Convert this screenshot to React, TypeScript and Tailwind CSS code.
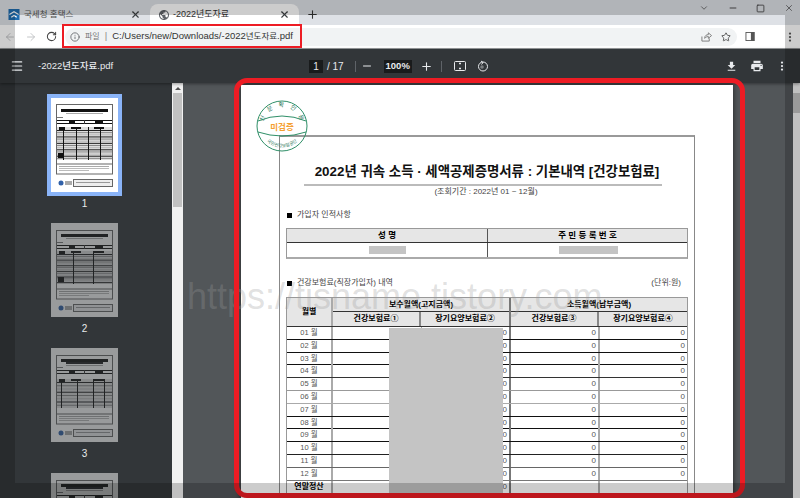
import { ArrowLeft, ArrowRight, Info, Menu, Minus, MoreVertical, Plus, RotateCw, Star, X, ChevronDown, Square } from 'lucide-react';

const KR = "font-['Liberation_Sans','Noto_Sans_CJK_KR',sans-serif]";

// row line colours go black / grey because the capture was downscaled
const months = [
  { label: '01 월', line: 'border-[#111]' },
  { label: '02 월', line: 'border-[#111]' },
  { label: '03 월', line: 'border-[#111]' },
  { label: '04 월', line: 'border-[#333]' },
  { label: '05 월', line: 'border-[#999]' },
  { label: '06 월', line: 'border-[#aaa]' },
  { label: '07 월', line: 'border-[#111]' },
  { label: '08 월', line: 'border-[#111]' },
  { label: '09 월', line: 'border-[#111]' },
  { label: '10 월', line: 'border-[#222]' },
  { label: '11 월', line: 'border-[#666]' },
  { label: '12 월', line: 'border-[#777]' },
];

const Thumb = ({ kind }: { kind: 1 | 2 | 3 }) => {
  const rows = kind === 1 ? 14 : kind === 2 ? 16 : 8;
  const cols = kind === 1 ? [12, 25, 37, 49] : kind === 2 ? [22, 42] : [10, 26, 42, 53];
  const top = kind === 3 ? 31 : kind === 2 ? 28 : 29;
  const h = kind === 3 ? 29 : 33;
  return (
    <svg viewBox="0 0 67 94" className="w-[67px] h-[94px] block bg-white">
      <rect x="5.5" y={kind === 1 ? 6.5 : 7.5} width="56" height="63" fill="none" stroke="#666" />
      <rect x="10" y="11" width="47" height="3" fill="#111" />
      {kind === 3 && <rect x="15" y="14" width="37" height="2" fill="#222" />}
      <rect x="15" y={kind === 3 ? 17 : 15} width="37" height="1" fill="#aaa" />
      <rect x="6" y="19" width="6" height="1" fill="#777" />
      <rect x="6" y="22" width="55" height="1" fill="#111" />
      <rect x="6" y="25" width="55" height="1" fill="#111" />
      <rect x="18" y="22" width="6" height="3" fill="#111" />
      <rect x="44" y="22" width="8" height="3" fill="#111" />
      <rect x="33" y="22" width="1" height="4" fill="#333" />
      <rect x="6" y={top} width="55" height={h} fill="#ddd" />
      {Array.from({ length: rows }).map((_, i) => (
        <rect key={i} x="6" y={top + 3 + (i * (h - 3)) / rows} width="55" height="1" fill={i % 3 === 0 ? '#222' : i % 3 === 1 ? '#888' : '#bbb'} />
      ))}
      {cols.map(x => (
        <rect key={x} x={x} y={top} width="1" height={h} fill="#111" />
      ))}
      <rect x="8" y={top} width="6" height="3" fill="#111" />
      <rect x="20" y={top} width="10" height="2" fill="#111" />
      <rect x="43" y={top} width="10" height="2" fill="#111" />
      {kind !== 3 && <rect x="7" y={top + h - 7} width="6" height="5" fill="#111" />}
      <rect x="5.5" y="66" width="56" height="10" fill="#fff" stroke="#666" />
      <rect x="8" y="68" width="50" height="1" fill="#aaa" />
      <rect x="8" y="70" width="50" height="1" fill="#bbb" />
      <rect x="8" y="72" width="30" height="1" fill="#bbb" />
      <circle cx="10" cy="85" r="2.5" fill="#3060a8" />
      <rect x="14" y="83" width="7" height="4" fill="#aaa" />
      <rect x="22.5" y="81.5" width="39" height="7" fill="#eee" stroke="#666" />
      <rect x="25" y="84" width="34" height="1" fill="#999" />
    </svg>
  );
};

const Stamp = () => (
  <svg viewBox="0 0 52 52" className="absolute left-[15px] top-[15px] w-[52px] h-[52px]">
    <defs>
      <path id="stampTop" d="M7 26a19 19 0 0 1 38 0" />
      <path id="stampBottom" d="M4.5 30a22 22 0 0 0 43 0" />
    </defs>
    <circle cx="26" cy="26" r="25" fill="none" stroke="#2f8f68" strokeWidth="1" />
    <path d="M2 21Q26 11 50 21M2 32Q26 40 50 32" fill="none" stroke="#2f8f68" />
    <text fontSize="6" fill="#2f7a5c" fontFamily="Noto Sans CJK KR" letterSpacing="5.5">
      <textPath href="#stampTop" startOffset="4">신분확인용</textPath>
    </text>
    <text fontSize="4.5" fill="#2f7a5c" fontFamily="Noto Sans CJK KR" textAnchor="middle">
      <textPath href="#stampBottom" startOffset="50%">국민건강보험공단</textPath>
    </text>
    <text x="26" y="29.5" textAnchor="middle" fontSize="8.5" fontWeight="700" fill="#f5a030" fontFamily="Noto Sans CJK KR">미검증</text>
  </svg>
);

export default function App() {
  return (
    <div className={`relative w-[800px] h-[498px] overflow-hidden flex flex-col bg-[#525659] ${KR}`}>
      {/* tab strip */}
      <div className="h-[25px] bg-[#dee1e6] flex items-end shrink-0">
        <div className="w-[150px] h-[21px] flex items-center pl-[8px] pr-[5px] text-[8.5px] text-[#555]">
          <svg viewBox="0 0 12 12" className="w-[12px] h-[11px] shrink-0">
            <rect width="12" height="12" fill="#1f6db0" />
            <path d="M1 6l5-3 5 3M3 9l3-2 3 2" fill="none" stroke="#fff" strokeWidth="1.3" />
          </svg>
          <span className="ml-[4px] flex-1">국세청 홈택스</span>
          <X className="w-[11px] h-[11px] text-[#3c4043] mr-[4px]" strokeWidth={2.5} />
        </div>
        <div className="w-[149px] h-[21px] bg-white rounded-t-lg flex items-center pl-[8px] pr-[5px] text-[9px] text-[#333]">
          <svg viewBox="0 0 24 24" className="w-[12px] h-[12px] shrink-0" fill="#5f6368">
            <path d="M12 2C6.48 2 2 6.48 2 12s4.48 10 10 10 10-4.48 10-10S17.52 2 12 2zm-1 17.93c-3.95-.49-7-3.85-7-7.93 0-.62.08-1.21.21-1.79L9 15v1c0 1.1.9 2 2 2v1.93zm6.9-2.54c-.26-.81-1-1.39-1.9-1.39h-1v-3c0-.55-.45-1-1-1H8v-2h2c.55 0 1-.45 1-1V7h2c1.1 0 2-.9 2-2v-.41c2.93 1.19 5 4.06 5 7.41 0 2.08-.8 3.97-2.1 5.39z" />
          </svg>
          <span className="ml-[3px] flex-1">-2022년도자료</span>
          <X className="w-[11px] h-[11px] text-[#3c4043] mr-[4px]" strokeWidth={2.5} />
        </div>
        <Plus className="w-[13px] h-[13px] ml-[7px] mb-[4px] text-[#333]" strokeWidth={2} />
        <div className="ml-auto self-start flex items-center h-[16px] text-[#333]">
          <ChevronDown className="w-[10px] h-[10px] mr-[19px]" strokeWidth={1.5} />
          <Minus className="w-[10px] h-[10px] mr-[18px]" strokeWidth={2} />
          <Square className="w-[9px] h-[9px] mr-[19px]" strokeWidth={2} />
          <X className="w-[10px] h-[10px] mr-[6px]" strokeWidth={1.5} />
        </div>
      </div>

      {/* address bar */}
      <div className="h-[24px] bg-white border-b border-[#9a9c9e] flex items-center shrink-0">
        <ArrowLeft className="w-[12px] h-[12px] ml-[4px] text-[#bdbfc2]" strokeWidth={1.8} />
        <ArrowRight className="w-[12px] h-[12px] ml-[9px] text-[#bdbfc2]" strokeWidth={1.8} />
        <RotateCw className="w-[11px] h-[11px] ml-[9px] text-[#444]" strokeWidth={2.2} />
        <div className="ml-[8px] w-[672px] h-[18px] rounded-full bg-[#f1f3f4] flex items-center pl-[5px] text-[9.5px]">
          <Info className="w-[10px] h-[10px] text-[#5f6368]" strokeWidth={2} />
          <span className="ml-[5px] text-[#777] text-[8px]">파일</span>
          <span className="ml-[5px] text-[#888]">|</span>
          <span className="ml-[5px] text-[#333]">C:/Users/new/Downloads/-2022<span className="text-[8.5px]">년도자료</span>.pdf</span>
          <svg viewBox="0 0 12 12" className="ml-auto w-[11px] h-[11px]" fill="none" stroke="#777" strokeWidth="1">
            <path d="M1 6v5h8V8M4 8c0-3 2-4 4-4V2l3.500 3L8 8V6C6 6 5 7 4 8z" />
          </svg>
          <Star className="w-[10px] h-[10px] ml-[9px] mr-[6px] text-[#444]" strokeWidth={2} />
        </div>
        <svg viewBox="0 0 10 10" className="w-[10px] h-[9px] ml-[8px]">
          <rect x="0.500" y="0.500" width="9" height="9" fill="#fff" stroke="#555" />
          <rect x="6" y="0" width="4" height="10" fill="#555" />
        </svg>
        <MoreVertical className="w-[12px] h-[12px] ml-[29px] text-[#555]" strokeWidth={2.5} />
      </div>

      {/* pdf toolbar */}
      <div className="h-[34px] bg-[#323639] flex items-center shrink-0 text-white text-[10px] relative shadow-[0_1px_3px_rgba(0,0,0,0.4)]">
        <Menu className="w-[14px] h-[14px] ml-[10px] text-[#e8eaed]" strokeWidth={2} />
        <span className="ml-[14px] text-[#e8eaed] text-[9.5px] font-medium">-2022년도자료.pdf</span>
        <div className="absolute left-[309px] top-0 h-full flex items-center text-[#e8eaed]">
          <span className="w-[14px] h-[13px] bg-[#191b1c] flex items-center justify-center">1</span>
          <span className="ml-[4px]">/ 17</span>
          <span className="ml-[11px] w-px h-[11px] bg-[#5f6368]" />
          <Minus className="w-[12px] h-[12px] ml-[5px]" strokeWidth={2} />
          <span className="ml-[11px] w-[28px] h-[13px] bg-[#191b1c] flex items-center justify-center font-bold text-[9.5px]">100%</span>
          <Plus className="w-[13px] h-[13px] ml-[8px]" strokeWidth={2} />
          <span className="ml-[8px] w-px h-[11px] bg-[#5f6368]" />
          <svg viewBox="0 0 12 11" className="w-[12px] h-[11px] ml-[12px]" fill="none" stroke="#e8eaed" strokeWidth="1">
            <rect x="0.500" y="0.500" width="11" height="9" rx="1" />
            <path d="M5 2.500h2M5 7.500h2" strokeWidth="1.500" />
          </svg>
          <svg viewBox="0 0 12 12" className="w-[12px] h-[12px] ml-[11px]" fill="none" stroke="#e8eaed" strokeWidth="1">
            <circle cx="6" cy="6.500" r="4.500" />
            <path d="M4 1l2 1.500L4.500 4.500" />
            <circle cx="5" cy="7" r="1.800" fill="#e8eaed" stroke="none" opacity="0.4" />
          </svg>
        </div>
        <div className="ml-auto flex items-center text-[#e8eaed]">
          <svg viewBox="0 0 24 24" className="w-[13px] h-[13px]" fill="currentColor">
            <path d="M19 9h-4V3H9v6H5l7 7 7-7zM5 18v2h14v-2H5z" />
          </svg>
          <svg viewBox="0 0 24 24" className="w-[14px] h-[14px] ml-[12px]" fill="currentColor">
            <path d="M19 8H5c-1.660 0-3 1.340-3 3v6h4v4h12v-4h4v-6c0-1.660-1.340-3-3-3zm-3 11H8v-5h8v5zm3-7c-.55 0-1-.45-1-1s.45-1 1-1 1 .45 1 1-.45 1-1 1zm-1-9H6v4h12V3z" />
          </svg>
          <MoreVertical className="w-[12px] h-[12px] ml-[12px] mr-[12px]" strokeWidth={2.5} />
        </div>
      </div>

      <div className="flex-1 flex min-h-0">
        {/* thumbnails */}
        <div className="w-[172px] shrink-0 bg-[#323639] pt-[15px] pr-[3px] flex flex-col items-center overflow-hidden">
          {([1, 2, 3, 4] as const).map(n => (
            <div key={n} className="h-[125px] shrink-0 flex flex-col items-center">
              <div className={n === 1 ? 'outline-4 outline-[#8ab4f8]' : 'opacity-50'}>
                <Thumb kind={n === 4 ? 3 : n} />
              </div>
              {n < 4 && <span className="mt-[5px] text-[10px] leading-[14px] text-[#e8eaed]">{n}</span>}
            </div>
          ))}
        </div>
        <div className="w-[11px] shrink-0 bg-[#f1f1f1] flex flex-col">
          <div className="h-[10px] flex items-center justify-center">
            <div className="w-0 h-0 border-x-[3px] border-x-transparent border-b-[3px] border-b-[#505050]" />
          </div>
          <div className="h-[114px] mx-px bg-[#c1c1c1]" />
        </div>

        {/* document */}
        <div className="flex-1 min-w-0 pl-[58px] pt-[2px] overflow-hidden">
          <div className="relative w-[492px] h-[600px] bg-white pt-[50px] pl-[38px] shadow-[0_0_6px_rgba(0,0,0,0.6)] text-[#222]">
            <div className="w-[416px] h-[500px] border-t-2 border-x border-t-[#999] border-x-[#888] bg-white">
              <div className="ml-[24px] w-[358px] mt-[24px] h-[25px] pl-[8px] border-b-2 border-[#bbb] text-center text-[13.4px] leading-[22px] font-bold text-[#111] whitespace-nowrap">
                2022년 귀속 소득 · 세액공제증명서류 : 기본내역 [건강보험료]
              </div>
              <div className="ml-[24px] w-[358px] text-center text-[8px] leading-[11px] pl-[6px] text-[#444]">(조회기간 : 2022년 01 ~ 12월)</div>
              <div className="ml-[7px] mt-[12px] flex items-center text-[8px] leading-[12px] text-[#444]">
                <span className="w-[5px] h-[5px] bg-black" />
                <span className="ml-[5px]">가입자 인적사항</span>
              </div>

              <div className="ml-[6px] mt-[7px] w-[402px] border-t border-x border-b-2 border-t-[#999] border-x-[#999] border-b-[#aaa] text-[8.5px] font-bold text-black">
                <div className="grid grid-cols-[201px_1fr] h-[14px] bg-[#e6e6e6] border-b border-[#333] leading-[13px] text-center">
                  <span className="border-r border-[#555]">성 명</span>
                  <span>주 민 등 록 번 호</span>
                </div>
                <div className="grid grid-cols-[201px_1fr] h-[14px]">
                  <div className="border-r border-[#555] flex items-center justify-center">
                    <div className="w-[37px] h-[8px] bg-[#c4c4c4]" />
                  </div>
                  <div className="flex items-center justify-center pl-[2px]">
                    <div className="w-[59px] h-[8px] bg-[#c4c4c4]" />
                  </div>
                </div>
              </div>

              <div className="ml-[7px] mr-[13px] mt-[18px] flex items-center text-[8px] leading-[12px] text-[#444]">
                <span className="w-[5px] h-[5px] bg-black" />
                <span className="ml-[5px]">건강보험료(직장가입자) 내역</span>
                <span className="ml-auto">(단위:원)</span>
              </div>

              <div className="relative ml-[6px] mt-[8px] w-[402px] border-t border-x border-t-[#999] border-x-[#999] text-[8px]">
                <div className="grid grid-cols-[46px_178px_1fr] h-[29px] bg-[#e6e6e6] font-bold text-black border-b border-[#333] text-center">
                  <div className="border-r-2 border-[#aaa] flex items-center justify-center">월별</div>
                  <div className="border-r-2 border-[#777] flex flex-col">
                    <div className="h-[14px] leading-[13px] border-b border-[#333]">보수월액(고지금액)</div>
                    <div className="grid grid-cols-2 flex-1 leading-[13px]">
                      <span className="border-r-2 border-[#888]">건강보험료①</span>
                      <span>장기요양보험료②</span>
                    </div>
                  </div>
                  <div className="flex flex-col">
                    <div className="h-[14px] leading-[13px] border-b border-[#333]">소득월액(납부금액)</div>
                    <div className="grid grid-cols-2 flex-1 leading-[13px]">
                      <span className="border-r-2 border-[#888]">건강보험료③</span>
                      <span>장기요양보험료④</span>
                    </div>
                  </div>
                </div>
                {months.map(m => (
                  <div key={m.label} className={`grid grid-cols-[46px_89px_89px_89px_1fr] h-[12.8px] border-b ${m.line} text-[8px] leading-[12px] text-[#555]`}>
                    <span className="text-center border-r-2 border-[#aaa] text-[7.5px]">{m.label}</span>
                    <span className="border-r border-[#aaa]" />
                    <span className="text-right pr-[2px] border-r-2 border-[#777]">0</span>
                    <span className="text-right pr-[2px] border-r-2 border-[#aaa]">0</span>
                    <span className="text-right pr-[2px]">0</span>
                  </div>
                ))}
                <div className="grid grid-cols-[46px_89px_89px_89px_1fr] h-[14px] leading-[12px] text-[8px] text-[#555]">
                  <span className="text-center border-r-2 border-[#aaa] font-bold text-black">연말정산</span>
                  <span className="border-r border-[#aaa]" />
                  <span className="text-right pr-[2px] border-r-2 border-[#777]">0</span>
                  <span className="border-r-2 border-[#aaa]" />
                  <span />
                </div>
                <div className="absolute left-[102px] top-[30px] w-[114px] h-[200px] bg-[#c4c4c4]" />
              </div>
            </div>
            <Stamp />
          </div>
        </div>
        <div className="w-[7px] shrink-0 bg-[#f1f1f1] flex flex-col">
          <div className="h-[10px]" />
          <div className="h-[20px] bg-[#c1c1c1]" />
        </div>
      </div>

      {/* blog watermark */}
      <div className="absolute left-[187px] top-[272px] text-[36px] leading-[50px] text-[#9a9a9a]/30 whitespace-nowrap">
        https://tisname.tistory.com
      </div>
      {/* red highlight boxes */}
      <div className="absolute left-[62px] top-[24px] w-[240px] h-[24px] border-2 border-[#ed1c24]" />
      <div className="absolute left-[234px] top-[78px] w-[511px] h-[420px] border-[5px] border-[#ed1c24] rounded-[13px]" />
      {/* dimmed edge left by the screen capture */}
      <div className="absolute inset-0 border-[15px] border-black/20 pointer-events-none" />
    </div>
  );
}
